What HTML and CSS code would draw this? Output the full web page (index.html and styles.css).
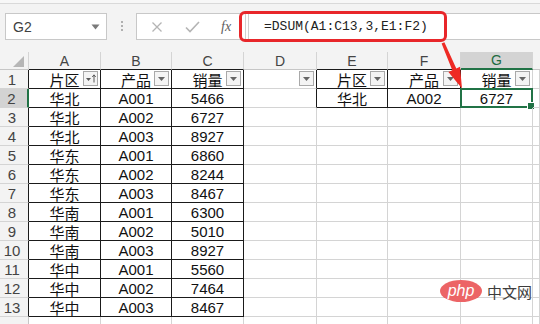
FILE: index.html
```html
<!DOCTYPE html>
<html>
<head>
<meta charset="utf-8">
<link rel="stylesheet" href="styles.css">
</head>
<body>
<div class="page">
  <div class="topstrip"></div>
  <div class="toolbar">
    <div class="namebox">
      <span class="nb-text">G2</span>
      <svg class="nb-caret" width="9" height="6" viewBox="0 0 9 6"><path d="M0.5 0.5h8l-4 5z" fill="#7a7a7a"/></svg>
    </div>
    <div class="grip"><i></i><i></i><i></i></div>
    <div class="fbar">
      <div class="fbtns">
        <svg class="fb-x" width="12" height="12" viewBox="0 0 12 12"><path d="M1.5 1.5l9 9M10.5 1.5l-9 9" stroke="#b4b4b4" stroke-width="1.3" fill="none"/></svg>
        <svg class="fb-ok" width="15" height="12" viewBox="0 0 15 12"><path d="M1 6.5l4 4L14 1" stroke="#b4b4b4" stroke-width="1.6" fill="none"/></svg>
        <span class="fb-fx">fx</span>
      </div>
      <div class="fdiv"></div>
      <div class="finput">=DSUM(A1:C13,3,E1:F2)</div>
    </div>
  </div>

  <div class="sheet">
    <div class="h corner"><svg width="12" height="11" viewBox="0 0 12 11"><path d="M11 0v11H0z" fill="#b6b6b6"/></svg></div>
    <div class="h tb">A</div>
    <div class="h tb">B</div>
    <div class="h tb">C</div>
    <div class="h">D</div>
    <div class="h tb">E</div>
    <div class="h tb">F</div>
    <div class="h sel">G</div>
    <div class="h last"></div>

    <div class="rh lb">1</div>
    <div class="c b">片区<span class="fbtn"><svg width="13" height="13" viewBox="0 0 13 13"><path d="M2 6h5l-2.5 3z" fill="#5a5a5a"/><path d="M10 10.5V3M8.3 5L10 2.8 11.7 5" stroke="#5a5a5a" stroke-width="1" fill="none"/></svg></span></div>
    <div class="c b">产品<span class="fbtn"><svg width="13" height="13" viewBox="0 0 13 13"><path d="M3 5h7l-3.5 4z" fill="#666"/></svg></span></div>
    <div class="c b">销量<span class="fbtn"><svg width="13" height="13" viewBox="0 0 13 13"><path d="M3 5h7l-3.5 4z" fill="#666"/></svg></span></div>
    <div class="c rb"><span class="fbtn"><svg width="13" height="13" viewBox="0 0 13 13"><path d="M3 5h7l-3.5 4z" fill="#666"/></svg></span></div>
    <div class="c b">片区<span class="fbtn"><svg width="13" height="13" viewBox="0 0 13 13"><path d="M3 5h7l-3.5 4z" fill="#666"/></svg></span></div>
    <div class="c b">产品<span class="fbtn"><svg width="13" height="13" viewBox="0 0 13 13"><path d="M3 5h7l-3.5 4z" fill="#666"/></svg></span></div>
    <div class="c bb">销量<span class="fbtn"><svg width="13" height="13" viewBox="0 0 13 13"><path d="M3 5h7l-3.5 4z" fill="#666"/></svg></span></div>
    <div class="c"></div>

    <div class="rh lb rsel">2</div>
    <div class="c b">华北</div><div class="c b">A001</div><div class="c b">5466</div>
    <div class="c rb"></div>
    <div class="c b">华北</div><div class="c b">A002</div><div class="c active">6727</div>
    <div class="c"></div>

    <div class="rh lb">3</div>
    <div class="c b">华北</div><div class="c b">A002</div><div class="c b">6727</div>
    <div class="c"></div><div class="c"></div><div class="c"></div><div class="c"></div><div class="c"></div>

    <div class="rh lb">4</div>
    <div class="c b">华北</div><div class="c b">A003</div><div class="c b">8927</div>
    <div class="c"></div><div class="c"></div><div class="c"></div><div class="c"></div><div class="c"></div>

    <div class="rh lb">5</div>
    <div class="c b">华东</div><div class="c b">A001</div><div class="c b">6860</div>
    <div class="c"></div><div class="c"></div><div class="c"></div><div class="c"></div><div class="c"></div>

    <div class="rh lb">6</div>
    <div class="c b">华东</div><div class="c b">A002</div><div class="c b">8244</div>
    <div class="c"></div><div class="c"></div><div class="c"></div><div class="c"></div><div class="c"></div>

    <div class="rh lb">7</div>
    <div class="c b">华东</div><div class="c b">A003</div><div class="c b">8467</div>
    <div class="c"></div><div class="c"></div><div class="c"></div><div class="c"></div><div class="c"></div>

    <div class="rh lb">8</div>
    <div class="c b">华南</div><div class="c b">A001</div><div class="c b">6300</div>
    <div class="c"></div><div class="c"></div><div class="c"></div><div class="c"></div><div class="c"></div>

    <div class="rh lb">9</div>
    <div class="c b">华南</div><div class="c b">A002</div><div class="c b">5010</div>
    <div class="c"></div><div class="c"></div><div class="c"></div><div class="c"></div><div class="c"></div>

    <div class="rh lb">10</div>
    <div class="c b">华南</div><div class="c b">A003</div><div class="c b">8927</div>
    <div class="c"></div><div class="c"></div><div class="c"></div><div class="c"></div><div class="c"></div>

    <div class="rh lb">11</div>
    <div class="c b">华中</div><div class="c b">A001</div><div class="c b">5560</div>
    <div class="c"></div><div class="c"></div><div class="c"></div><div class="c"></div><div class="c"></div>

    <div class="rh lb">12</div>
    <div class="c b">华中</div><div class="c b">A002</div><div class="c b">7464</div>
    <div class="c"></div><div class="c"></div><div class="c"></div><div class="c"></div><div class="c"></div>

    <div class="rh lb">13</div>
    <div class="c b">华中</div><div class="c b">A003</div><div class="c b">8467</div>
    <div class="c"></div><div class="c"></div><div class="c"></div><div class="c"></div><div class="c"></div>

    <div class="rh"></div>
    <div class="c"></div><div class="c"></div><div class="c"></div>
    <div class="c"></div><div class="c"></div><div class="c"></div><div class="c"></div><div class="c"></div>
  </div>

  <div class="redbox"></div>
  <svg class="arrow" width="540" height="324" viewBox="0 0 540 324">
    <polygon points="441.6,43.5 444.4,42.3 456.3,68.4 460,66.8 462,88.5 448.4,72 452.3,70.2" fill="#ee2a24"/>
  </svg>
  <div class="watermark">
    <span class="wm-pill">php</span>
    <span class="wm-text">中文网</span>
  </div>
</div>
</body>
</html>
```

FILE: styles.css
```css
* { box-sizing: border-box; }
html, body { margin: 0; padding: 0; }
body {
  width: 540px;
  height: 324px;
  overflow: hidden;
  background: #ffffff;
  font-family: "Liberation Sans", "Noto Sans CJK SC", sans-serif;
}
.page {
  position: relative;
  width: 540px;
  height: 324px;
  overflow: hidden;
}
.topstrip {
  height: 4px;
  background: #f7f7f7;
  border-bottom: 1px solid #d9d9d9;
}
.toolbar {
  height: 48px;
  background: #f3f3f3;
  display: flex;
  align-items: flex-start;
  padding: 9px 0 0 5px;
}
.namebox {
  width: 102px;
  height: 27px;
  background: #ffffff;
  border: 1px solid #c8c8c8;
  display: flex;
  align-items: center;
  justify-content: space-between;
  padding: 0 6px 0 7px;
}
.nb-text {
  font-size: 14px;
  color: #404040;
}
.grip {
  width: 3px;
  margin: 8px 0 0 14px;
  display: flex;
  flex-direction: column;
  gap: 2px;
}
.grip i {
  display: block;
  width: 2px;
  height: 2px;
  background: #b0b0b0;
}
.fbar {
  flex: 1;
  height: 27px;
  margin-left: 12px;
  background: #ffffff;
  border: 1px solid #c8c8c8;
  border-right: none;
  display: flex;
  align-items: center;
}
.fbtns {
  width: 108px;
  display: flex;
  align-items: center;
  padding-left: 14px;
}
.fb-x { margin-right: 22px; }
.fb-ok { margin-right: 21px; }
.fb-fx {
  font-family: "Liberation Serif", serif;
  font-style: italic;
  font-size: 14px;
  color: #606060;
}
.fdiv {
  width: 4px;
  height: 25px;
  border-left: 1px solid #d0d0d0;
  border-right: 1px solid #d0d0d0;
}
.finput {
  padding-left: 15px;
  font-family: "Liberation Mono", monospace;
  font-size: 13px;
  color: #222;
}

.sheet {
  display: grid;
  grid-template-columns: 29px 72px 71px 72px 73px 71px 73px 72px 7px;
  grid-template-rows: 18px repeat(13, 19px) 19px;
}
.h {
  background: #f3f3f3;
  border-right: 1px solid #d4d4d4;
  border-bottom: 1px solid #c6c6c6;
  font-size: 14px;
  color: #444;
  display: flex;
  align-items: center;
  justify-content: center;
  line-height: 1;
}
.h.corner {
  justify-content: flex-end;
  align-items: flex-end;
  padding: 0 3px 2px 0;
}
.h.tb { border-bottom-color: #1a1a1a; }
.h.sel {
  background: #d3d3d3;
  color: #1e6b41;
  border-bottom: 2px solid #217346;
}
.h.last { border-right: none; }
.rh {
  background: #f3f3f3;
  border-right: 1px solid #c6c6c6;
  border-bottom: 1px solid #d4d4d4;
  font-size: 15px;
  color: #444;
  display: flex;
  align-items: center;
  justify-content: center;
  padding-right: 4px;
}
.rh.lb { border-right-color: #1a1a1a; }
.rh.rsel {
  background: #d3d3d3;
  border-right: 2px solid #217346;
}
.c {
  position: relative;
  border-right: 1px solid #d4d4d4;
  border-bottom: 1px solid #d4d4d4;
  font-size: 15px;
  color: #111;
  display: flex;
  align-items: center;
  justify-content: center;
  white-space: nowrap;
}
.c.b {
  border-right-color: #1a1a1a;
  border-bottom-color: #1a1a1a;
}
.c.rb { border-right-color: #1a1a1a; }
.c.bb { border-bottom-color: #1a1a1a; }
.c.active {
  border: 2px solid #217346;
  margin: -1px 0 0 -1px;
}
.c.active::after {
  content: "";
  position: absolute;
  right: -4px;
  bottom: -4px;
  width: 6px;
  height: 6px;
  background: #217346;
  border: 1px solid #ffffff;
}
.fbtn {
  position: absolute;
  right: 2px;
  top: 1px;
  width: 15px;
  height: 15px;
  background: #f4f4f4;
  border: 1px solid #a9a9a9;
  display: flex;
  align-items: center;
  justify-content: center;
}
.fbtn svg { display: block; }

.redbox {
  position: absolute;
  left: 239px;
  top: 11px;
  width: 208px;
  height: 31px;
  border: 3.5px solid #e8262a;
  border-radius: 6px;
}
.arrow {
  position: absolute;
  left: 0;
  top: 0;
  pointer-events: none;
}
.watermark {
  position: absolute;
  left: 440px;
  top: 280px;
  display: flex;
  align-items: center;
  gap: 5px;
}
.wm-pill {
  width: 42px;
  height: 22px;
  border-radius: 50%;
  background: #ec6466;
  color: #ffffff;
  font-family: "Liberation Sans", sans-serif;
  font-style: italic;
  font-size: 16px;
  line-height: 21px;
  text-align: center;
}
.wm-text {
  font-family: "Noto Sans CJK SC", sans-serif;
  font-size: 15px;
  color: #3c3c3c;
  line-height: 1;
}
```
